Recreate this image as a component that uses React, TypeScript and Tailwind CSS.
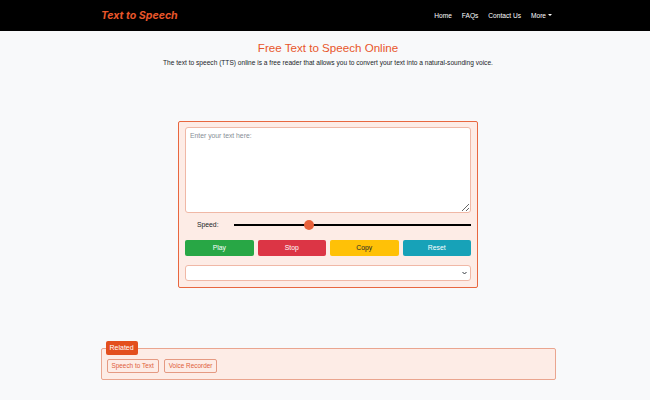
const App = () => {
  return (
    <div className="min-h-[414px] bg-white" style={{ fontFamily: '"Liberation Sans", Arial, sans-serif' }}>
      <div className="bg-[#f8f9fa] min-h-[400px] flex flex-col">
        {/* Navbar */}
        <nav className="h-[31px] bg-black flex items-center pl-[7px]">
          <div className="w-[455px] mx-auto flex items-center justify-between">
            <span className="text-[#e8562a] text-[10.6px] font-bold italic" style={{ fontFamily: 'Inter, "Open Sans", sans-serif' }}>
              Text to Speech
            </span>
            <div className="flex items-center gap-[10px] text-white text-[6.6px] pr-[4px]">
              <span>Home</span>
              <span>FAQs</span>
              <span>Contact Us</span>
              <span className="flex items-center gap-[2px]">
                More
                <span className="w-0 h-0 border-l-[2px] border-r-[2px] border-t-[2.5px] border-l-transparent border-r-transparent border-t-white" />
              </span>
            </div>
          </div>
        </nav>

        <div className="pl-[6px] flex flex-col">
          {/* Heading */}
          <div className="text-center pt-[10px]">
            <h1 className="text-[#e8562a] text-[11.6px] leading-[14px]">Free Text to Speech Online</h1>
            <p className="text-[#212529] text-[6.6px] mt-[3px]">
              The text to speech (TTS) online is a free reader that allows you to convert your text into a natural-sounding voice.
            </p>
          </div>

          {/* Tool card */}
          <div className="mt-[53px] mx-auto w-[300px] border-[1.5px] border-[#e8673f] rounded-[2px] bg-[#fdece6] px-[6px] pt-[5px] pb-[6px]">
            <textarea
              className="w-full h-[86px] bg-white border border-[#f0b8a6] rounded-[3px] px-[4px] py-[3px] text-[6.8px] text-gray-700 placeholder:text-[#868e96] resize-y outline-none block"
              placeholder="Enter your text here:"
            />
            <div className="flex items-center h-[24px]">
              <span className="w-[49px] pl-[12px] text-[6.8px] text-[#212529]">Speed:</span>
              <div className="flex-1 relative h-[10px] flex items-center">
                <div className="w-full h-[2px] bg-black" />
                <div className="absolute left-[70px] w-[10px] h-[10px] rounded-full bg-[#e8603a]" />
              </div>
            </div>
            <div className="grid grid-cols-4 gap-[4px] mt-[3px]">
              <button className="h-[16px] rounded-[2px] bg-[#28a745] text-white text-[6.8px]">Play</button>
              <button className="h-[16px] rounded-[2px] bg-[#dc3545] text-white text-[6.8px]">Stop</button>
              <button className="h-[16px] rounded-[2px] bg-[#ffc107] text-[#212529] text-[6.8px]">Copy</button>
              <button className="h-[16px] rounded-[2px] bg-[#17a2b8] text-white text-[6.8px]">Reset</button>
            </div>
            <div className="mt-[9px] h-[16px] bg-white border border-[#f0b8a6] rounded-[3px] flex items-center justify-end pr-[3px]">
              <svg width="5" height="4" viewBox="0 0 10 8">
                <path d="M1 2 L5 6 L9 2" stroke="#343a40" strokeWidth="2" fill="none" />
              </svg>
            </div>
          </div>

          {/* Related */}
          <div className="mt-[53px] mx-auto w-[455px] relative">
            <div className="border border-[#eaa58f] rounded-[2px] bg-[#fdece6] h-[32px] mt-[7px] flex items-center gap-[5px] px-[5px] pt-[4px]">
              <span className="border border-[#e59a82] rounded-[2px] text-[#e0603a] text-[6.4px] h-[14px] px-[4px] flex items-center bg-[#fdece6]">Speech to Text</span>
              <span className="border border-[#e59a82] rounded-[2px] text-[#e0603a] text-[6.4px] h-[14px] px-[4px] flex items-center bg-[#fdece6]">Voice Recorder</span>
            </div>
            <span className="absolute left-[5px] top-0 h-[14px] px-[4px] bg-[#e34f1e] text-white text-[7px] rounded-[2px] flex items-center">Related</span>
          </div>
        </div>
      </div>
    </div>
  );
};

export default App;
